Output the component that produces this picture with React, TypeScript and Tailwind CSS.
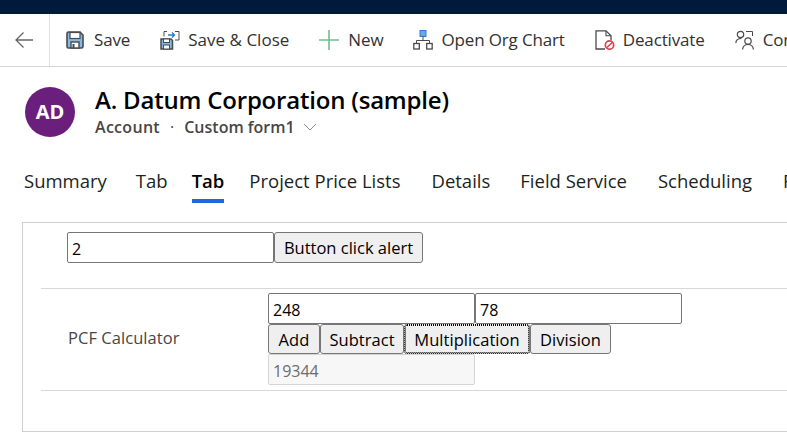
import React from "react";

const FONT = "font-['Open_Sans','Noto_Sans',sans-serif]";

/* ── Command bar icons ── */
function SaveIcon() {
  return (
    <svg width="18" height="18" viewBox="0 0 18 18" className="shrink-0">
      <path d="M1 2.5 A1.5 1.5 0 0 1 2.5 1 H14 L17 4 V15.5 A1.5 1.5 0 0 1 15.5 17 H2.5 A1.5 1.5 0 0 1 1 15.5 Z" fill="#83b9e4" stroke="#4a4a4a" strokeWidth="1.6" />
      <rect x="4" y="1.5" width="10" height="6" fill="#fff" stroke="#4a4a4a" strokeWidth="1.2" />
      <rect x="5" y="11" width="8" height="6" fill="#fff" stroke="#4a4a4a" strokeWidth="1.4" />
      <rect x="6.5" y="13" width="2" height="4" fill="#4a4a4a" />
    </svg>
  );
}

function SaveCloseIcon() {
  return (
    <svg width="20" height="20" viewBox="0 0 20 20" className="shrink-0">
      <path d="M1 9 H11 L12.5 10.5 V19 H1 Z" fill="#83b9e4" stroke="#4a4a4a" strokeWidth="1.5" />
      <rect x="3.5" y="9" width="6" height="3.5" fill="#fff" stroke="#4a4a4a" />
      <rect x="3.5" y="15" width="6" height="4" fill="#fff" stroke="#4a4a4a" />
      <path d="M4 6.5 V1.5 H7 M15 1.5 H19 V10 H15" fill="none" stroke="#4a4a4a" strokeWidth="1" />
      <path d="M8 5 H14.5 M12 2.5 L14.5 5 L12 7.5" fill="none" stroke="#2b7cd3" strokeWidth="1.4" />
    </svg>
  );
}

function PlusIcon() {
  return (
    <svg width="20" height="20" viewBox="0 0 20 20" className="shrink-0">
      <path d="M10 0 V20 M0 10 H20" stroke="#6cc08b" strokeWidth="1.6" />
    </svg>
  );
}

function OrgIcon() {
  return (
    <svg width="20" height="20" viewBox="0 0 20 20" className="shrink-0">
      <rect x="7" y="0.5" width="6" height="6" fill="#69a8e0" stroke="#2b7cd3" />
      <path d="M10 6.5 V10.5 M3.5 13.5 V10.5 H16.5 V13.5" fill="none" stroke="#4a4a4a" />
      <rect x="0.8" y="13.5" width="5.5" height="5.5" fill="#fff" stroke="#4a4a4a" strokeWidth="1.3" />
      <rect x="13.7" y="13.5" width="5.5" height="5.5" fill="#fff" stroke="#4a4a4a" strokeWidth="1.3" />
    </svg>
  );
}

function DeactivateIcon() {
  return (
    <svg width="20" height="20" viewBox="0 0 20 20" className="shrink-0">
      <path d="M10 19 H1 V0.8 H11 L16 5.8 V10" fill="none" stroke="#4a4a4a" strokeWidth="1.3" />
      <path d="M11 0.8 V5.8 H16" fill="none" stroke="#4a4a4a" strokeWidth="1.1" />
      <circle cx="14.5" cy="15" r="4.2" fill="#fff" stroke="#d9444f" strokeWidth="1.7" />
      <path d="M11.8 17.5 L17.2 12.5" stroke="#d9444f" strokeWidth="1.6" />
    </svg>
  );
}

function ConnectIcon() {
  return (
    <svg width="20" height="20" viewBox="0 0 20 20" className="shrink-0">
      <circle cx="5.5" cy="4.5" r="3.2" fill="none" stroke="#4a4a4a" strokeWidth="1.2" />
      <path d="M0.8 13 C1 10 3 8.5 6.5 8.5" fill="none" stroke="#4a4a4a" strokeWidth="1.2" />
      <circle cx="13" cy="11" r="3.2" fill="none" stroke="#4a4a4a" strokeWidth="1.2" />
      <path d="M7.5 19.5 C8 16 10 14.5 13 14.5 C16 14.5 18 16 18.5 19.5" fill="none" stroke="#4a4a4a" strokeWidth="1.2" />
      <path d="M11 1.5 H17.5 V6" fill="none" stroke="#4a4a4a" />
    </svg>
  );
}

const COMMANDS = [
  { label: "Save", icon: <SaveIcon />, gap: "gap-[10px] tracking-[-0.15px]" },
  { label: "Save & Close", icon: <SaveCloseIcon />, gap: "gap-[8px] tracking-[0.02px]" },
  { label: "New", icon: <PlusIcon />, gap: "gap-[9px] tracking-[-0.15px]" },
  { label: "Open Org Chart", icon: <OrgIcon />, gap: "gap-[8px] tracking-[-0.15px]" },
  { label: "Deactivate", icon: <DeactivateIcon />, gap: "gap-[8px] tracking-[-0.15px]" },
  { label: "Connect", icon: <ConnectIcon />, gap: "gap-[8px] tracking-[-0.15px]" },
];

const TABS = [
  { label: "Summary", ml: "" },
  { label: "Tab", ml: "ml-[29px]" },
  { label: "Tab", ml: "ml-[24px]" },
  { label: "Project Price Lists", ml: "ml-[25px]" },
  { label: "Details", ml: "ml-[31px]" },
  { label: "Field Service", ml: "ml-[30px]" },
  { label: "Scheduling", ml: "ml-[31px]" },
  { label: "Files", ml: "ml-[31px]" },
];

const INPUT = "h-[31px] w-[207px] shrink-0 rounded-[2px] border border-[#767676] bg-white px-[4px] pt-[2px] text-[16px] text-black outline-none";
const BTN = "h-[30px] shrink-0 rounded-[3px] border border-[#767676] bg-[#efefef] pt-[2px] text-[16.5px] text-black";

export default function App() {
  return (
    <div className={`h-[448px] w-[787px] overflow-hidden bg-white ${FONT}`}>
      <div className="h-[14px] bg-[#001a3b]" />

      {/* Command bar */}
      <div className="flex h-[53px] items-center border-b border-[#d8d8d8]">
        <div className="flex h-full w-[50px] shrink-0 items-center justify-start border-r border-[#e0e0e0] pl-[14px]">
          <svg width="20" height="18" viewBox="0 0 20 18">
            <path d="M19 9 H2 M9.5 1.5 L2 9 L9.5 16.5" fill="none" stroke="#666" strokeWidth="1.3" />
          </svg>
        </div>
        <div className="ml-[16px] flex shrink-0 items-center gap-[30px]">
          {COMMANDS.map((c) => (
            <div key={c.label} className={`flex items-center whitespace-nowrap text-[17px] text-[#323130] ${c.gap}`}>
              {c.icon}
              <span>{c.label}</span>
            </div>
          ))}
        </div>
      </div>

      {/* Record header */}
      <div className="flex h-[71px] items-start gap-[20px] pl-[25px] pt-[20px]">
        <div className="flex h-[50px] w-[50px] items-center justify-center rounded-full bg-[#6b1f7c] text-[20px] font-bold text-white">
          AD
        </div>
        <div className="-mt-[1px]">
          <div className="text-[24px] font-semibold leading-[28px] tracking-[-0.2px] text-black">A. Datum Corporation (sample)</div>
          <div className="mt-[1px] flex h-[24px] items-center text-[16px] font-semibold leading-[24px] text-[#484644]">
            <span className="tracking-[0.3px]">Account</span>
            <span className="mx-[10px] font-normal">·</span>
            <span>Custom form1</span>
            <svg width="14" height="8" viewBox="0 0 14 8" className="ml-[8px]">
              <path d="M1 1 L7 7 L13 1" fill="none" stroke="#8a8886" strokeWidth="1" />
            </svg>
          </div>
        </div>
      </div>

      {/* Tabs */}
      <div className="mt-[30px] flex whitespace-nowrap pl-[24px] text-[18.5px] text-[#201f1e]">
        {TABS.map((t, i) => (
          <div key={i} className={`h-[35px] shrink-0 leading-[26px] ${t.ml} ${i === 2 ? "border-b-[4px] border-[#2266e3] font-semibold text-black" : ""}`}>
            {t.label}
          </div>
        ))}
      </div>

      {/* Form section */}
      <div className="ml-[22px] mt-[19px] h-[210px] w-[800px] border border-[#cfcfcf] pl-[18px]">
        <div className="h-[66px] border-b border-[#d8d8d8] pl-[26px] pt-[9px]">
          <div className="flex">
            <input readOnly value="2" className={INPUT} />
            <button className={`${BTN} h-[31px] w-[149px]`}>Button click alert</button>
          </div>
        </div>
        <div className="flex h-[102px] items-start border-b border-[#d8d8d8] pt-[4px]">
          <div className="w-[227px] self-center pb-[6px] pl-[27px] text-[16.5px] tracking-[0.05px] text-[#484644]">PCF Calculator</div>
          <div>
            <div className="flex">
              <input readOnly value="248" className={INPUT} />
              <input readOnly value="78" className={INPUT} />
            </div>
            <div className="flex tracking-[0.05px]">
              <button className={`${BTN} w-[52px]`}>Add</button>
              <button className={`${BTN} w-[84px]`}>Subtract</button>
              <button className={`${BTN} w-[126px] border-dotted border-black outline-1 -outline-offset-2 outline-dotted outline-black`}>Multiplication</button>
              <button className={`${BTN} w-[81px]`}>Division</button>
            </div>
            <input readOnly disabled value="19344" className="block h-[31px] w-[207px] rounded-[2px] border border-[#d5d5d5] bg-[#f7f7f7] px-[4px] pt-[2px] text-[16px] text-[#6d6d6d] outline-none" />
          </div>
        </div>
      </div>
    </div>
  );
}
